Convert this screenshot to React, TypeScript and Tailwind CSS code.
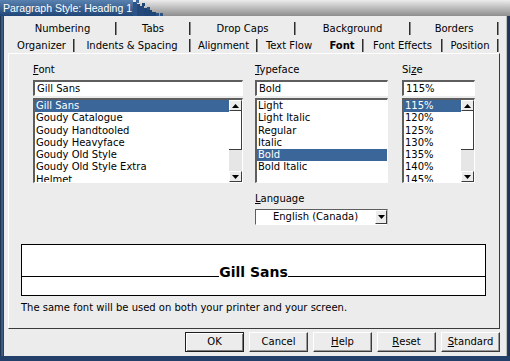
import React from "react";

const row1 = [
  { t: "Numbering", w: "w-[107px]" },
  { t: "Tabs", w: "w-[74px]" },
  { t: "Drop Caps", w: "w-[105px]" },
  { t: "Background", w: "w-[115px]" },
  { t: "Borders", w: "w-[88px]" },
];

const row2 = [
  { t: "Organizer", w: "w-[65px]" },
  { t: "Indents & Spacing", w: "w-[116px]" },
  { t: "Alignment", w: "w-[67px]" },
  { t: "Text Flow", w: "w-[64px]", nosep: true },
  { t: "Font", w: "w-[42px]", active: true },
  { t: "Font Effects", w: "w-[79px]" },
  { t: "Position", w: "w-[56px]" },
];

function Sep() {
  return <div className="w-[2px] h-[13px] border-l border-l-[#2e2e2e] border-r border-r-[#8a8a8a] self-end mb-[1px]" />;
}

function TabRow({ tabs }: { tabs: { t: string; w: string; nosep?: boolean; active?: boolean }[] }) {
  return (
    <div className="flex h-[17px] ml-[6px]">
      {tabs.map((tab) => (
        <div key={tab.t} className={`${tab.w} flex h-full`}>
          <div className={`flex-1 flex items-center justify-center pt-[2px] whitespace-nowrap ${tab.active ? "font-bold" : ""}`}>
            {tab.t}
          </div>
          {tab.nosep ? <div className="w-[2px]" /> : <Sep />}
        </div>
      ))}
    </div>
  );
}

function Arrow({ up }: { up?: boolean }) {
  return (
    <div className="h-[11px] w-[13px] flex items-center justify-center bg-[#ececec] border-t border-l border-t-white border-l-white border-r border-b border-r-[#3c3c3c] border-b-[#3c3c3c]">
      <svg width="7" height="4" viewBox="0 0 7 4">
        <polygon points={up ? "0,4 3.5,0 7,4" : "0,0 7,0 3.5,4"} fill="#000" />
      </svg>
    </div>
  );
}

function Scrollbar() {
  return (
    <div className="w-[13px] flex flex-col bg-[#e6e6e6] shrink-0">
      <Arrow up />
      <div className="h-[39px] bg-white border-r border-b border-r-[#3c3c3c] border-b-[#3c3c3c]" />
      <div className="flex-1" />
      <Arrow />
    </div>
  );
}

function ListBox({
  items,
  selected,
  w,
  scroll,
}: {
  items: string[];
  selected: number;
  w: string;
  scroll?: boolean;
}) {
  return (
    <div
      className={`${w} h-[85px] bg-white border-t-2 border-l-2 border-t-[#5e5e5e] border-l-[#5e5e5e] border-r border-b border-r-white border-b-white flex overflow-hidden`}
    >
      <div className="flex-1 overflow-hidden">
        {items.map((it, i) => (
          <div
            key={it}
            className={`h-[12.3px] leading-[12.3px] pl-[1px] whitespace-nowrap ${
              i === selected ? "bg-[#3a669a] text-white" : ""
            }`}
          >
            {it}
          </div>
        ))}
      </div>
      {scroll && <Scrollbar />}
    </div>
  );
}

function Input({ value, w }: { value: string; w: string }) {
  return (
    <div
      className={`${w} h-[16px] bg-white border-t-2 border-l-2 border-t-[#5e5e5e] border-l-[#5e5e5e] border-r border-b border-r-white border-b-white flex items-center pl-[2px] whitespace-nowrap`}
    >
      {value}
    </div>
  );
}

function Btn({ children, def }: { children: React.ReactNode; def?: boolean }) {
  return (
    <div
      className={`w-[59px] h-[20px] flex items-center justify-center bg-[#ececec] ${
        def
          ? "border border-[#1e1e1e] shadow-[inset_1px_1px_0_#ffffff,inset_-1px_-1px_0_#7a7a7a]"
          : "border border-t-white border-l-white border-r-[#3a3a3a] border-b-[#3a3a3a] shadow-[inset_-1px_-1px_0_#9a9a9a]"
      }`}
    >
      {children}
    </div>
  );
}

export default function App() {
  return (
    <div className="w-[510px] h-[361px] bg-[#22406a] flex flex-col overflow-hidden font-['DejaVu_Sans',sans-serif] text-[10px] text-black leading-[12px]">
      {/* Title bar */}
      <div className="h-[16px] flex bg-linear-to-b from-[#ececec] to-[#8e8e8e] shrink-0">
        <div className="w-[133px] h-full bg-linear-to-b from-[#5a82b0] to-[#1f4677] flex items-center pl-[3px] shrink-0">
          <span className="text-white text-[10.5px] font-['Liberation_Sans',sans-serif] whitespace-nowrap leading-none">
            Paragraph Style: Heading 1
          </span>
        </div>
        <svg width="32" height="16" viewBox="0 0 32 16" className="shrink-0">
          <rect x="0" y="2" width="4" height="14" fill="#2c5486" />
          <rect x="4" y="4" width="3" height="12" fill="#24497a" />
          <rect x="7" y="6" width="4" height="10" fill="#24497a" />
          <rect x="3" y="0" width="3" height="3" fill="#3d6798" />
          <rect x="9" y="3" width="3" height="3" fill="#1f4677" />
          <rect x="11" y="8" width="4" height="8" fill="#1f4677" />
          <rect x="15" y="10" width="4" height="6" fill="#1f4677" />
          <rect x="14" y="7" width="3" height="3" fill="#2a5283" />
          <rect x="19" y="12" width="4" height="4" fill="#1f4677" />
          <rect x="23" y="13" width="3" height="3" fill="#2a5283" />
          <rect x="27" y="13" width="3" height="3" fill="#2a5283" />
        </svg>
      </div>

      {/* Body */}
      <div className="flex-1 flex mb-[5px]">
        <div className="w-[4px] bg-linear-to-r from-[#10243f] via-[#4a6c95] to-[#1a3355] shrink-0" />
        <div className="w-[502px] bg-[#ececec] flex flex-col pt-[3px] pb-[4px]">
          <TabRow tabs={row1} />
          <TabRow tabs={row2} />

          {/* Frame */}
          <div className="ml-[4px] mr-[6px] border-t border-l border-t-white border-l-white border-r border-b border-r-[#3a3a3a] border-b-[#3a3a3a] pt-[10px] pb-[14px] pl-[12px] flex flex-col">
            <div className="flex ml-[12px]">
              <div className="w-[210px] flex flex-col">
                <div className="h-[12px] mb-[4px]">
                  <span className="underline">F</span>ont
                </div>
                <Input value="Gill Sans" w="w-[210px]" />
                <div className="h-[2px]" />
                <ListBox
                  w="w-[210px]"
                  scroll
                  selected={0}
                  items={[
                    "Gill Sans",
                    "Goudy Catalogue",
                    "Goudy Handtooled",
                    "Goudy Heavyface",
                    "Goudy Old Style",
                    "Goudy Old Style Extra",
                    "Helmet",
                  ]}
                />
              </div>
              <div className="w-[133px] ml-[12px] flex flex-col">
                <div className="h-[12px] mb-[4px]">
                  <span className="underline">T</span>ypeface
                </div>
                <Input value="Bold" w="w-[133px]" />
                <div className="h-[2px]" />
                <ListBox
                  w="w-[133px]"
                  selected={4}
                  items={["Light", "Light Italic", "Regular", "Italic", "Bold", "Bold Italic"]}
                />
              </div>
              <div className="w-[73px] ml-[14px] flex flex-col">
                <div className="h-[12px] mb-[4px]">
                  Si<span className="underline">z</span>e
                </div>
                <Input value="115%" w="w-[73px]" />
                <div className="h-[2px]" />
                <ListBox
                  w="w-[73px]"
                  scroll
                  selected={0}
                  items={["115%", "120%", "125%", "130%", "135%", "140%", "145%"]}
                />
              </div>
            </div>

            {/* Language */}
            <div className="flex mt-[10px]">
              <div className="w-[234px] shrink-0" />
              <div className="flex flex-col">
                <div className="h-[12px] mb-[4px]">
                  <span className="underline">L</span>anguage
                </div>
                <div className="w-[133px] h-[16px] flex bg-white border-t border-l border-t-[#5e5e5e] border-l-[#5e5e5e] border-r border-b border-r-[#bdbdbd] border-b-white">
                  <div className="flex-1 flex items-center justify-center whitespace-nowrap">English (Canada)</div>
                  <div className="w-[12px] flex items-center justify-center bg-[#ececec] border-t border-l border-t-white border-l-white border-r border-b border-r-[#3a3a3a] border-b-[#3a3a3a]">
                    <svg width="7" height="4" viewBox="0 0 7 4">
                      <polygon points="0,0 7,0 3.5,4" fill="#000" />
                    </svg>
                  </div>
                </div>
              </div>
            </div>

            {/* Preview */}
            <div className="mt-[19px] w-[465px] h-[52px] bg-white border border-black flex flex-col">
              <div className="h-[32px] flex items-end border-b border-black">
                <div className="flex-1" />
                <span className="text-[14px] font-bold leading-none bg-white -mb-[3px] whitespace-nowrap">
                  Gill Sans
                </span>
                <div className="flex-1" />
              </div>
            </div>

            <div className="mt-[6px] h-[12px] whitespace-nowrap">
              The same font will be used on both your printer and your screen.
            </div>
          </div>

          {/* Buttons */}
          <div className="flex justify-end gap-[5px] mt-[3px] mr-[6px]">
            <Btn def>OK</Btn>
            <Btn>Cancel</Btn>
            <Btn>
              <span className="underline">H</span>elp
            </Btn>
            <Btn>
              <span className="underline">R</span>eset
            </Btn>
            <Btn>
              <span className="underline">S</span>tandard
            </Btn>
          </div>
        </div>
        <div className="flex-1 flex">
          <div className="w-[1px] bg-[#bdbdbd]" />
          <div className="w-[1px] bg-[#3a3a3a]" />
          <div className="flex-1 bg-[#1e3556]" />
        </div>
      </div>
    </div>
  );
}
